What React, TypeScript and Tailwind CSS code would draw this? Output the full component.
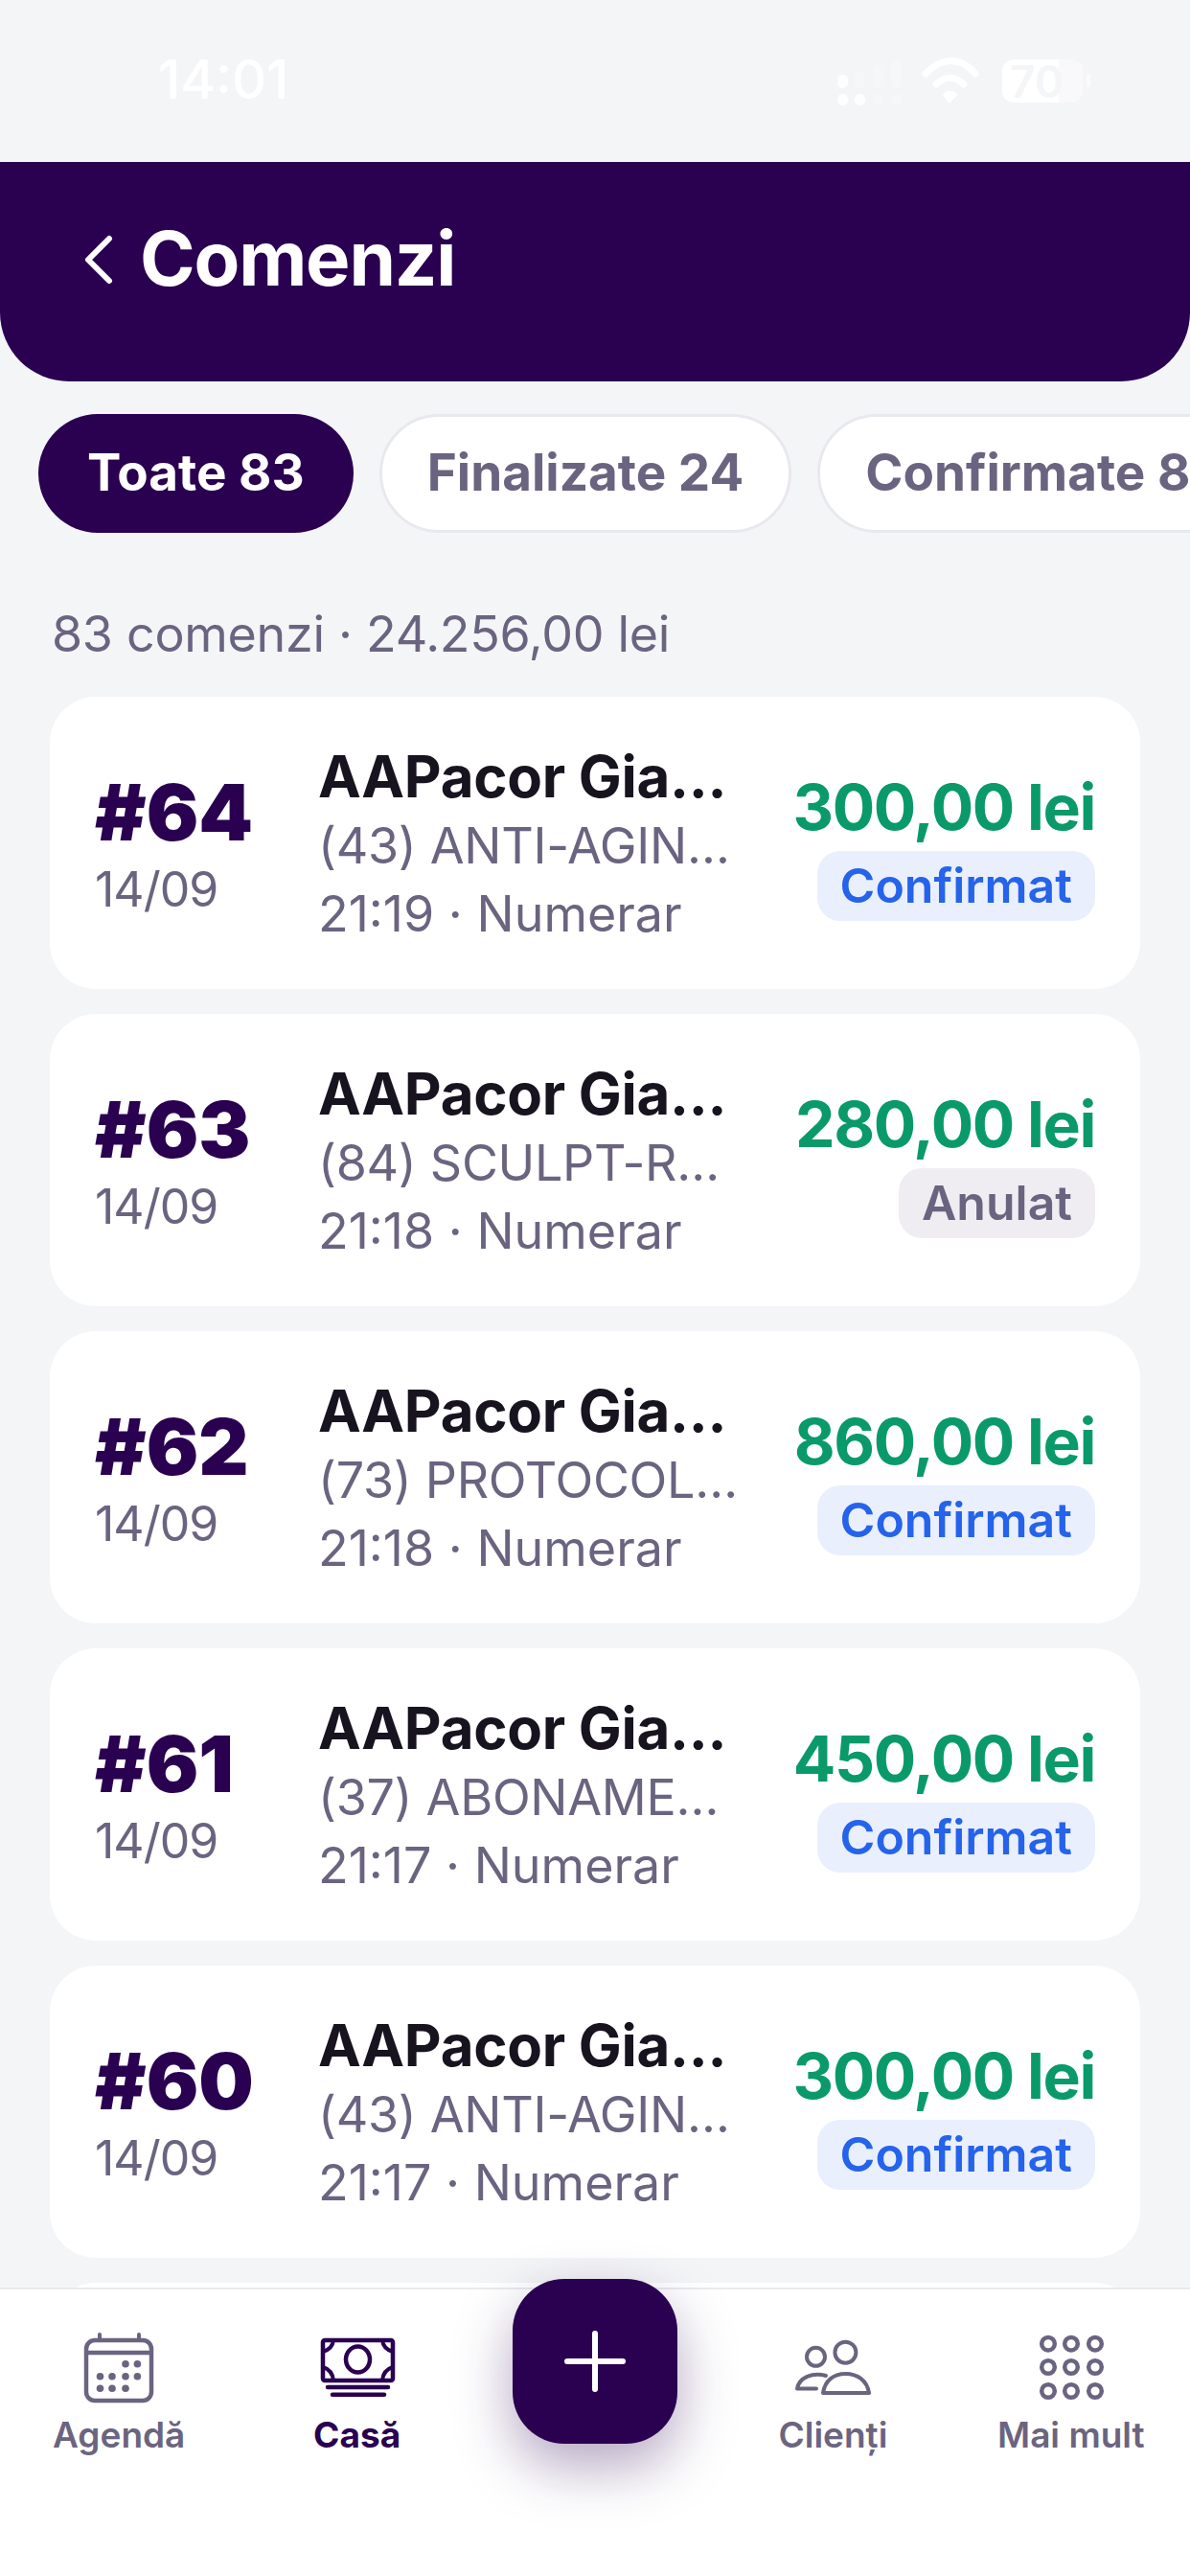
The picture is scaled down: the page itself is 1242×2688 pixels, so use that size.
const orders = [
  { id: "#64", date: "14/09", service: "(43) ANTI-AGING FACIAL", time: "21:19 · Numerar", total: "300,00 lei", status: "Confirmat" },
  { id: "#63", date: "14/09", service: "(84) SCULPT-RELAX", time: "21:18 · Numerar", total: "280,00 lei", status: "Anulat" },
  { id: "#62", date: "14/09", service: "(73) PROTOCOLUL COMPLET", time: "21:18 · Numerar", total: "860,00 lei", status: "Confirmat" },
  { id: "#61", date: "14/09", service: "(37) ABONAMENT LUNAR", time: "21:17 · Numerar", total: "450,00 lei", status: "Confirmat" },
  { id: "#60", date: "14/09", service: "(43) ANTI-AGING FACIAL", time: "21:17 · Numerar", total: "300,00 lei", status: "Confirmat" },
  { id: "#59", date: "14/09", service: "(43) ANTI-AGING FACIAL", time: "21:16 · Numerar", total: "300,00 lei", status: "Confirmat" },
];

const CalendarIcon = () => (
  <svg viewBox="84 100 80 80" className="w-[80px] h-[80px]" fill="none" stroke="#6b6480" strokeWidth="4.5">
    <rect x="90" y="112" width="68" height="63" rx="9" />
    <path d="M90 125H158" />
    <path d="M104 106V111M145 106V111" strokeWidth="4" strokeLinecap="round" />
    <g fill="#6b6480" stroke="none">
      {[[131, 136.7], [143.4, 136.7], [104.5, 149.7], [117, 149.7], [131, 149.7], [143.4, 149.7], [104.5, 162.3], [117, 162.3], [131, 162.3]].map(([x, y]) => (
        <circle key={`${x}-${y}`} cx={x} cy={y} r="3.8" />
      ))}
    </g>
  </svg>
);

const CashIcon = () => (
  <svg viewBox="332 100 80 80" className="w-[80px] h-[80px]" fill="none" stroke="#2a0050" strokeWidth="4.5">
    <rect x="336" y="112" width="73" height="42" rx="2" strokeLinejoin="round" />
    <ellipse cx="372.5" cy="132" rx="12.5" ry="13.5" />
    <path d="M347 112Q346 121 336 124M398 112Q399 121 409 124M347 154Q346 143 336 140M398 154Q399 143 409 140" strokeWidth="4" />
    <path d="M341 161H404" strokeLinecap="round" />
    <path d="M346 168.7H400" strokeLinecap="round" />
  </svg>
);

const ClientsIcon = () => (
  <svg viewBox="208 100 80 80" className="w-[80px] h-[80px]" fill="none" stroke="#6b6480" strokeWidth="4" strokeLinecap="round" strokeLinejoin="round">
    <circle cx="230.5" cy="129.3" r="9.5" />
    <circle cx="261.4" cy="124.7" r="11" />
    <path d="M238 167C240 154 249 147 261.5 147C274 147 284 154 286 167Z" />
    <path d="M241 149C227 145 213 151 211 162.5H231" />
  </svg>
);

const GridIcon = () => (
  <svg viewBox="456 100 80 80" className="w-[80px] h-[80px]" fill="none" stroke="#6b6480" strokeWidth="4.5">
    {[115.7, 140, 165].map((y) =>
      [472, 496, 521].map((x) => <circle key={`${x}-${y}`} cx={x} cy={y} r="6.8" />)
    )}
  </svg>
);

const StatusIcons = () => (
  <svg viewBox="0 0 320 90" className="w-[320px] h-[90px]" fill="#fff">
    <g opacity="0.95">
      <rect x="34" y="38" width="11" height="14" rx="5" />
      <rect x="34" y="58" width="11" height="12" rx="5" />
      <rect x="52" y="58" width="11" height="12" rx="5" />
    </g>
    <g opacity="0.25">
      <rect x="52" y="34" width="11" height="18" rx="5" />
      <rect x="71" y="28" width="11" height="24" rx="5" />
      <rect x="90" y="24" width="11" height="28" rx="5" />
      <rect x="71" y="58" width="11" height="12" rx="5" />
      <rect x="90" y="58" width="11" height="12" rx="5" />
    </g>
    <path d="M126 37C143 19 163 19 178 37" fill="none" stroke="#fff" strokeWidth="7" strokeLinecap="round" />
    <path d="M137 48C147 39 157 39 166 48" fill="none" stroke="#fff" strokeWidth="7" strokeLinecap="round" />
    <path d="M151 66L145 59C148 55 155 55 158 59Z" stroke="#fff" strokeWidth="2" strokeLinejoin="round" />
    <path d="M218 22H265V67H218A12 12 0 0 1 206 55V34A12 12 0 0 1 218 22Z" />
    <path d="M265 22H278A12 12 0 0 1 290 34V55A12 12 0 0 1 278 67H265Z" opacity="0.45" />
    <rect x="294" y="37" width="4" height="14" rx="2" opacity="0.6" />
  </svg>
);

function OrderCard({ order }: { order: (typeof orders)[number] }) {
  const cancelled = order.status === "Anulat";
  return (
    <div className="h-[305px] shrink-0 rounded-[48px] bg-white flex items-center pl-[47px] pr-[47px]">
      <div className="w-[233px] shrink-0">
        <div className="text-[81px] leading-[90px] font-black text-[#2a0050]">{order.id}</div>
        <div className="mt-[6px] text-[50px] leading-[58px] text-[#6b6480] tracking-[-1px]">{order.date}</div>
      </div>
      <div className="w-[443px] shrink-0 pt-[4px]">
        <div className="text-[60px] leading-[72px] font-bold text-[#17131f] tracking-[-0.3px]">AAPacor Gia...</div>
        <div className="mt-[2px] text-[52px] leading-[70px] text-[#6b6480] truncate w-[440px] tracking-[-0.3px]">{order.service}</div>
        <div className="text-[52px] leading-[72px] text-[#6b6480]">{order.time}</div>
      </div>
      <div className="flex-1 flex flex-col items-end pt-[5px]">
        <div className="text-[66px] leading-[78px] font-bold text-[#0a9a6a] whitespace-nowrap tracking-[-1.4px]">{order.total}</div>
        <div
          className={
            cancelled
              ? "mt-[7px] h-[73px] px-[24px] rounded-[24px] bg-[#efedf2] text-[#6b6480] text-[50px] font-semibold flex items-center"
              : "mt-[7px] h-[73px] px-[24px] rounded-[24px] bg-[#e9effd] text-[#2563eb] text-[50px] font-semibold flex items-center"
          }
        >
          {order.status}
        </div>
      </div>
    </div>
  );
}

const NavItem = ({ icon, label, active }: { icon: React.ReactNode; label: string; active?: boolean }) => (
  <div className="flex-1 flex flex-col items-center">
    <div className="h-[80px] flex items-center justify-center">{icon}</div>
    <div
      className={
        active
          ? "mt-[7px] text-[37px] leading-[48px] font-bold text-[#2a0050]"
          : "mt-[7px] text-[37px] leading-[48px] font-semibold text-[#6b6480]"
      }
    >
      {label}
    </div>
  </div>
);

export default function App() {
  return (
    <div className="relative w-[1242px] h-[2688px] overflow-hidden bg-[#f4f5f7] font-['Inter',sans-serif]">
      {/* status bar, white on light as in the capture */}
      <div className="h-[169px] relative">
        <div className="absolute left-[165px] top-[52px] text-[56px] leading-[62px] font-medium text-white">14:01</div>
        <div className="absolute left-[840px] top-[40px]">
          <StatusIcons />
          <div className="absolute left-[214px] top-[17px] text-[46px] leading-[56px] font-semibold text-[#f4f5f7]">70</div>
        </div>
      </div>

      <div className="h-[229px] bg-[#2a0050] rounded-b-[72px] flex items-start pl-[86px] pt-[53px] gap-[26px]">
        <svg viewBox="0 0 34 58" className="w-[34px] h-[58px] mt-[20px]" fill="none" stroke="#fff" strokeWidth="6" strokeLinecap="round" strokeLinejoin="round">
          <path d="M28 7L6 29L28 51" />
        </svg>
        <div className="text-[78px] leading-[96px] font-bold text-white tracking-[-1.2px]">Comenzi</div>
      </div>

      <div className="mt-[34px] pl-[40px] flex gap-[27px] overflow-hidden whitespace-nowrap text-[53px] font-bold">
        <div className="h-[124px] px-[51px] rounded-full bg-[#2a0050] text-white flex items-center">Toate 83</div>
        <div className="h-[124px] px-[47px] rounded-full bg-white border-[3px] border-[#e9e8ee] text-[#6b6480] flex items-center">Finalizate 24</div>
        <div className="h-[124px] px-[47px] rounded-full bg-white border-[3px] border-[#e9e8ee] text-[#6b6480] flex items-center">Confirmate 83</div>
      </div>

      <div className="mt-[76px] pl-[54px] text-[52px] leading-[60px] text-[#6b6480] tracking-[-0.3px]">83 comenzi · 24.256,00 lei</div>

      <div className="mt-[35px] mx-[52px] flex flex-col gap-[26px]">
        {orders.map((o) => (
          <OrderCard key={o.id} order={o} />
        ))}
      </div>

      {/* bottom tab bar sits over the list */}
      <div className="absolute left-0 right-0 bottom-0 h-[301px] bg-white border-t-[2px] border-[#eaeaee] flex pt-[41px]">
        <NavItem icon={<CalendarIcon />} label="Agendă" />
        <NavItem icon={<CashIcon />} label="Casă" active />
        <div className="flex-1" />
        <NavItem icon={<ClientsIcon />} label="Clienți" />
        <NavItem icon={<GridIcon />} label="Mai mult" />
      </div>
      <div className="absolute left-[535px] top-[2378px] w-[172px] h-[172px] rounded-[54px] bg-[#2a0050] shadow-[0_24px_60px_rgba(42,0,80,0.35)] flex items-center justify-center">
        <svg viewBox="0 0 64 64" className="w-[64px] h-[64px]" stroke="#fff" strokeWidth="6" strokeLinecap="round">
          <path d="M32 3V61M3 32H61" />
        </svg>
      </div>
    </div>
  );
}
